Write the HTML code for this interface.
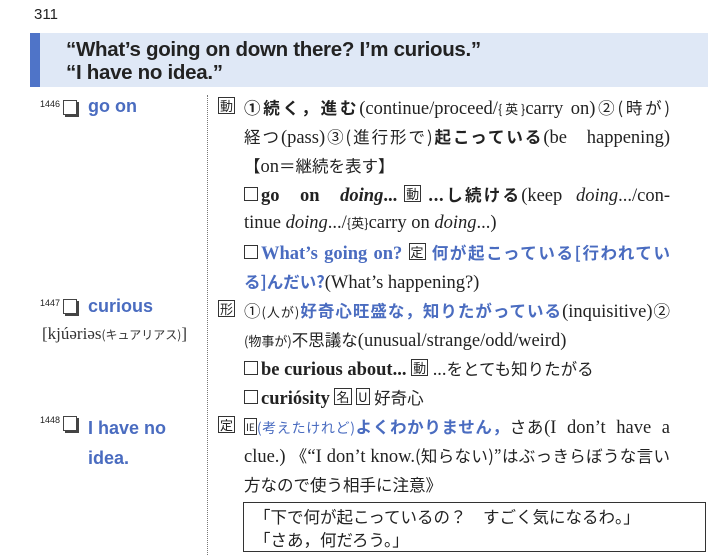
<!DOCTYPE html>
<html><head><meta charset="utf-8"><style>
body{margin:0;width:720px;height:558px;background:#fff;position:relative;overflow:hidden;font-family:"Liberation Serif","Noto Serif CJK SC","Noto Sans CJK JP",serif;color:#222}
.a{position:absolute;white-space:nowrap}
.l{position:absolute;left:244px;width:426px;font-size:18.5px;line-height:20px;white-space:nowrap;text-align:justify;text-align-last:justify}
.n{text-align-last:left}
.j{font-family:"Noto Sans CJK JP",sans-serif;font-size:16.5px}
.b{color:#4a6cc0;font-weight:bold}
.s{font-family:"Liberation Sans","Noto Sans CJK JP",sans-serif}
.bx{display:inline-block;border:1.5px solid #333;font-family:"Noto Sans CJK JP",sans-serif;font-size:13px;line-height:15px;padding:0 1px;vertical-align:2px;text-align-last:left}
.cb{display:inline-block;width:12px;height:12px;border:1.5px solid #333;margin-right:3px;vertical-align:0}
.hw{position:absolute;left:88px;font-family:"Liberation Sans",sans-serif;font-weight:bold;color:#4a6cc0;font-size:18px}
.num{position:absolute;left:40px;font-family:"Liberation Sans",sans-serif;font-size:9px}
.ck{position:absolute;left:63px;width:12px;height:13px;border:1.5px solid #444;box-shadow:2px 2px 0 #444;background:#fff}
</style></head><body>
<div class="a s" style="left:34px;top:6px;font-size:15px">311</div>
<div class="a" style="left:30px;top:33px;width:10px;height:54px;background:#4f74c8"></div>
<div class="a" style="left:40px;top:33px;width:668px;height:54px;background:#dfe8f6"></div>
<div class="a s" style="left:66px;top:38px;font-size:20.5px;line-height:23px;color:#222;font-weight:bold;letter-spacing:-0.3px">“What’s going on down there? I’m curious.”<br>“I have no idea.”</div>
<div class="a" style="left:207px;top:95px;height:460px;border-left:1.5px dotted #777"></div>

<div class="num" style="top:99px">1446</div><div class="ck" style="top:100px"></div>
<div class="hw" style="top:96px">go on</div>
<div class="num" style="top:298px">1447</div><div class="ck" style="top:299px"></div>
<div class="hw" style="top:296px">curious</div>
<div class="a" style="left:42px;top:324px;font-size:17px;color:#333">[kjúəriəs<span class="j" style="font-size:12px">(キュアリアス)</span>]</div>
<div class="num" style="top:415px">1448</div><div class="ck" style="top:416px"></div>
<div class="hw" style="top:413px;line-height:30px">I have no<br>idea.</div>

<div class="a" style="left:218px;top:97px"><span class="bx">動</span></div>
<div class="l" style="top:97px"><span class="j"><b>①続く，進む</b></span>(continue/proceed/<span class="j" style="font-size:13px">{英}</span>carry on)<span class="j">②(時が)</span></div>
<div class="l" style="top:126px"><span class="j">経つ</span>(pass)<span class="j">③(進行形で)<b>起こっている</b></span>(be &nbsp; happening)</div>
<div class="l n" style="top:155px"><span class="j">【</span>on<span class="j">＝継続を表す】</span></div>
<div class="l" style="top:184px"><span class="cb"></span><b>go &nbsp; on &nbsp; <i>doing</i>...</b> <span class="bx">動</span> <span class="j"><b>...し続ける</b></span>(keep &nbsp;<i>doing</i>.../con-</div>
<div class="l n" style="top:213px">tinue <i>doing</i>.../<span class="j" style="font-size:13px">{英}</span>carry on <i>doing</i>...)</div>
<div class="l" style="top:242px"><span class="cb"></span><span class="b">What’s going on?</span> <span class="bx">定</span> <span class="j b">何が起こっている[行われてい</span></div>
<div class="l n" style="top:271px"><span class="j b">る]んだい?</span>(What’s happening?)</div>
<div class="a" style="left:218px;top:300px"><span class="bx">形</span></div>
<div class="l" style="top:300px"><span class="j">①<span style="font-size:13px">(人が)</span><span class="b">好奇心旺盛な，知りたがっている</span></span>(inquisitive)<span class="j">②</span></div>
<div class="l n" style="top:329px"><span class="j"><span style="font-size:13px">(物事が)</span>不思議な</span>(unusual/strange/odd/weird)</div>
<div class="l n" style="top:358px"><span class="cb"></span><b>be curious about...</b> <span class="bx">動</span> <span class="j">...をとても知りたがる</span></div>
<div class="l n" style="top:387px"><span class="cb"></span><b>curiósity</b> <span class="bx">名</span> <span class="bx">U</span> <span class="j">好奇心</span></div>
<div class="a" style="left:218px;top:416px"><span class="bx">定</span></div>
<div class="l" style="top:416px"><span class="j"><span class="bx" style="font-size:10px">IE</span><span style="font-size:14px;color:#4a6cc0">(考えたけれど)</span><span class="b">よくわかりません，</span>さあ</span>(I &nbsp;don’t &nbsp;have &nbsp;a</div>
<div class="l" style="top:445px">clue.) <span class="j">《</span>“I don’t know.<span class="j">(知らない)”はぶっきらぼうな言い</span></div>
<div class="l n" style="top:474px"><span class="j">方なので使う相手に注意》</span></div>
<div class="a" style="left:243px;top:502px;width:463px;height:50px;border:1.5px solid #333;font-family:'Noto Sans CJK JP',sans-serif;font-size:16.5px;line-height:23px;padding:2px 0 0 10px;box-sizing:border-box">「下で何が起こっているの？　すごく気になるわ。」<br>「さあ，何だろう。」</div>
</body></html>
